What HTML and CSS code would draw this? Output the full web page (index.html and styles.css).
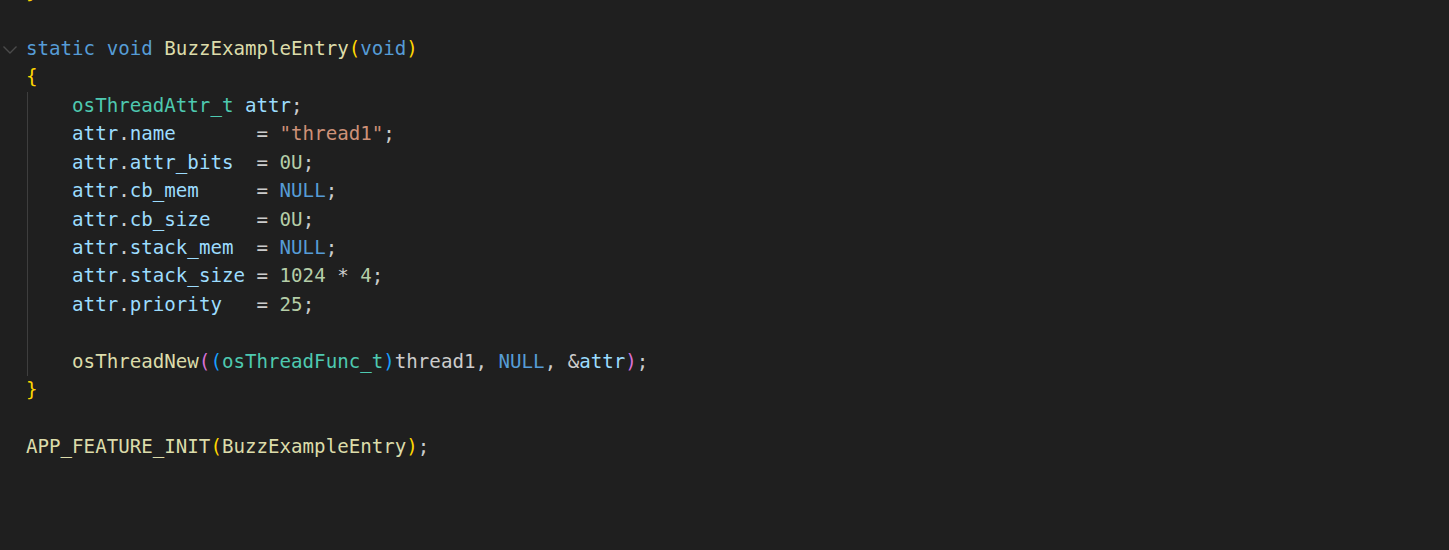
FILE: index.html
```html
<!DOCTYPE html>
<html>
<head>
<meta charset="utf-8">
<link rel="stylesheet" href="styles.css">
</head>
<body>
<div class="editor">
  <div class="gutter">
    <div class="gline"></div>
    <div class="gline"></div>
    <div class="gline"><svg class="fold" width="20" height="14" viewBox="0 0 20 14"><polyline points="3.5,3.5 10,10 16.5,3.5" fill="none" stroke="#4b4b4b" stroke-width="1.4"/></svg></div>
  </div>
  <div class="code">
    <div class="line"><span class="b1">}</span></div>
    <div class="line"></div>
    <div class="line"><span class="kw">static</span> <span class="kw">void</span> <span class="fn">BuzzExampleEntry</span><span class="b1">(</span><span class="kw">void</span><span class="b1">)</span></div>
    <div class="line"><span class="b1">{</span></div>
    <div class="block">
      <div class="line"><span class="ty">osThreadAttr_t</span> <span class="var">attr</span>;</div>
      <div class="line"><span class="var">attr</span>.<span class="var">name</span>       = <span class="str">"thread1"</span>;</div>
      <div class="line"><span class="var">attr</span>.<span class="var">attr_bits</span>  = <span class="num">0U</span>;</div>
      <div class="line"><span class="var">attr</span>.<span class="var">cb_mem</span>     = <span class="kw">NULL</span>;</div>
      <div class="line"><span class="var">attr</span>.<span class="var">cb_size</span>    = <span class="num">0U</span>;</div>
      <div class="line"><span class="var">attr</span>.<span class="var">stack_mem</span>  = <span class="kw">NULL</span>;</div>
      <div class="line"><span class="var">attr</span>.<span class="var">stack_size</span> = <span class="num">1024</span> * <span class="num">4</span>;</div>
      <div class="line"><span class="var">attr</span>.<span class="var">priority</span>   = <span class="num">25</span>;</div>
      <div class="line"></div>
      <div class="line"><span class="fn">osThreadNew</span><span class="b2">(</span><span class="b3">(</span><span class="ty">osThreadFunc_t</span><span class="b3">)</span>thread1, <span class="kw">NULL</span>, &amp;<span class="var">attr</span><span class="b2">)</span>;</div>
    </div>
    <div class="line"><span class="b1">}</span></div>
    <div class="line"></div>
    <div class="line"><span class="fn">APP_FEATURE_INIT</span><span class="b1">(</span><span class="fn">BuzzExampleEntry</span><span class="b1">)</span>;</div>
  </div>
</div>
</body>
</html>
```

FILE: styles.css
```css
html, body {
  margin: 0;
  padding: 0;
  background: #1f1f1f;
  height: 100%;
  overflow: hidden;
}

.editor {
  display: flex;
  margin-top: -22px;
  font-family: "DejaVu Sans Mono", "Liberation Mono", monospace;
  font-size: 19.15px;
  color: #cccccc;
}

.gutter {
  width: 26px;
  flex: none;
}

.gline {
  height: 28.45px;
  display: flex;
  align-items: center;
}

.fold {
  display: block;
  margin-top: 1px;
}

.code {
  flex: 1;
}

.line {
  height: 28.45px;
  line-height: 28.45px;
  white-space: pre;
}

.block {
  margin-left: 1px;
  border-left: 1px solid #3e3e3e;
  padding-left: calc(4ch - 2px);
}

.kw { color: #569cd6; }
.fn { color: #dcdcaa; }
.ty { color: #4ec9b0; }
.var { color: #9cdcfe; }
.str { color: #ce9178; }
.num { color: #b5cea8; }
.b1 { color: #ffd700; }
.b2 { color: #da70d6; }
.b3 { color: #179fff; }
```
